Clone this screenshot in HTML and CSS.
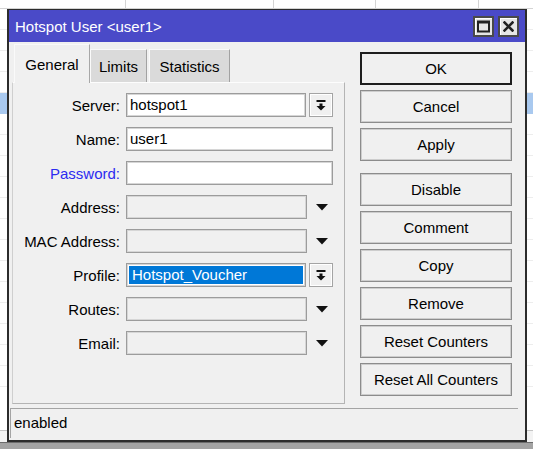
FILE: index.html
```html
<!DOCTYPE html>
<html>
<head>
<meta charset="utf-8">
<link rel="stylesheet" href="styles.css">
</head>
<body>
<div class="desk">
  <div class="table">
    <div class="thead">
      <div class="c c1"></div><div class="c c2"></div><div class="c c3"></div><div class="c c4"></div><div class="c c5"></div>
    </div>
    <div class="tr"></div>
    <div class="tr"></div>
    <div class="tr"></div>
    <div class="tr"></div>
    <div class="tr sel"></div>
    <div class="tr"></div>
    <div class="tr"></div>
    <div class="tr"></div>
    <div class="tr"></div>
    <div class="tr"></div>
    <div class="tr"></div>
    <div class="tr"></div>
    <div class="tr"></div>
    <div class="tr"></div>
    <div class="tr"></div>
    <div class="tr"></div>
    <div class="tr"></div>
    <div class="tr"></div>
  </div>
  <div class="mainstatus"></div>
  <div class="taskbar"></div>

  <div class="win">
    <div class="titlebar">
      <span class="title">Hotspot User &lt;user1&gt;</span>
      <div class="tbtns">
        <span class="tbtn"><svg width="13" height="13" viewBox="0 0 13 13"><rect x="1" y="1.5" width="11" height="10" fill="none" stroke="#222" stroke-width="2"/><rect x="1" y="1" width="11" height="2.5" fill="#222"/></svg></span>
        <span class="tbtn"><svg width="11" height="11" viewBox="0 0 11 11"><path d="M1.5 1.5 L9.5 9.5 M9.5 1.5 L1.5 9.5" stroke="#222" stroke-width="2.6" stroke-linecap="square"/></svg></span>
      </div>
    </div>
    <div class="wbody">
      <div class="main">
        <div class="left">
          <div class="tabs">
            <div class="tab active">General</div>
            <div class="tab t-limits">Limits</div>
            <div class="tab t-stats">Statistics</div>
          </div>
          <div class="panel">
            <div class="row">
              <span class="lbl">Server:</span>
              <div class="input short">hotspot1</div>
              <div class="ddbtn"><svg width="10" height="11" viewBox="0 0 10 11"><rect x="0.5" y="0" width="9" height="2" fill="#111"/><rect x="3.5" y="3.5" width="3" height="3" fill="#111"/><path d="M0.5 6 L9.5 6 L5 10.5 Z" fill="#111"/></svg></div>
            </div>
            <div class="row">
              <span class="lbl">Name:</span>
              <div class="input full">user1</div>
            </div>
            <div class="row">
              <span class="lbl blue">Password:</span>
              <div class="input full"></div>
            </div>
            <div class="row">
              <span class="lbl">Address:</span>
              <div class="input dis"></div>
              <div class="tri"><svg width="12" height="7" viewBox="0 0 12 7"><path d="M0 0 L12 0 L6 6.5 Z" fill="#111"/></svg></div>
            </div>
            <div class="row">
              <span class="lbl">MAC Address:</span>
              <div class="input dis"></div>
              <div class="tri"><svg width="12" height="7" viewBox="0 0 12 7"><path d="M0 0 L12 0 L6 6.5 Z" fill="#111"/></svg></div>
            </div>
            <div class="row">
              <span class="lbl">Profile:</span>
              <div class="input short selbox"><span class="selected">Hotspot_Voucher</span></div>
              <div class="ddbtn"><svg width="10" height="11" viewBox="0 0 10 11"><rect x="0.5" y="0" width="9" height="2" fill="#111"/><rect x="3.5" y="3.5" width="3" height="3" fill="#111"/><path d="M0.5 6 L9.5 6 L5 10.5 Z" fill="#111"/></svg></div>
            </div>
            <div class="row">
              <span class="lbl">Routes:</span>
              <div class="input dis"></div>
              <div class="tri"><svg width="12" height="7" viewBox="0 0 12 7"><path d="M0 0 L12 0 L6 6.5 Z" fill="#111"/></svg></div>
            </div>
            <div class="row">
              <span class="lbl">Email:</span>
              <div class="input dis"></div>
              <div class="tri"><svg width="12" height="7" viewBox="0 0 12 7"><path d="M0 0 L12 0 L6 6.5 Z" fill="#111"/></svg></div>
            </div>
          </div>
        </div>
        <div class="buttons">
          <div class="btn default">OK</div>
          <div class="btn">Cancel</div>
          <div class="btn">Apply</div>
          <div class="btn sep">Disable</div>
          <div class="btn">Comment</div>
          <div class="btn">Copy</div>
          <div class="btn">Remove</div>
          <div class="btn">Reset Counters</div>
          <div class="btn">Reset All Counters</div>
        </div>
      </div>
      <div class="status">enabled</div>
    </div>
  </div>
</div>
</body>
</html>
```
FILE: styles.css
```css
* { box-sizing: border-box; }
html, body { margin: 0; padding: 0; }
body {
  font-family: "Liberation Sans", Arial, sans-serif;
  font-size: 15px;
  color: #000;
  background: #fff;
}
.desk {
  position: relative;
  width: 533px;
  height: 449px;
  overflow: hidden;
  display: flex;
  flex-direction: column;
  background: #fff;
}
.table { flex: 1; overflow: hidden; }
.thead { display: flex; height: 9px; border-bottom: 1px solid #d4d4d4; }
.c { height: 100%; border-right: 1px solid #d4d4d4; }
.c1 { width: 126px; }
.c2 { width: 148px; }
.c3 { width: 102px; }
.c4 { width: 103px; }
.c5 { flex: 1; border-right: none; }
.tr { height: 21px; border-bottom: 1px solid #ededed; }
.tr.sel { background: #a9c9ef; border-bottom-color: #a9c9ef; }
.mainstatus { height: 12px; border-top: 1px solid #c4c4c4; background: #f3f3f3; }
.taskbar { height: 7px; background: #a3a3a3; border-top: 1px solid #6c6c6c; }

.win {
  position: absolute;
  left: 7px;
  top: 9px;
  width: 520px;
  height: 433px;
  border: 2px solid #2c2c2c;
  border-top-width: 1px;
  background: #f0f0f0;
  display: flex;
  flex-direction: column;
}
.titlebar {
  height: 32px;
  background: #4a4ac8;
  display: flex;
  align-items: center;
  justify-content: space-between;
  padding: 0 6px 0 6px;
}
.title { color: #fff; font-size: 15px; line-height: 32px; padding-top: 1px; }
.tbtns { display: flex; gap: 4px; }
.tbtn {
  width: 21px;
  height: 21px;
  background: #e6e6e6;
  border: 2px solid #4a4a4a;
  box-shadow: inset 1px 1px 0 #fff;
  display: flex;
  align-items: center;
  justify-content: center;
}
.wbody { flex: 1; display: flex; flex-direction: column; }
.main { display: flex; }
.left { margin-left: 3px; width: 333px; }
.tabs {
  margin-top: 2px;
  height: 38px;
  display: flex;
  align-items: flex-end;
  padding-left: 2px;
}
.tab {
  height: 33px;
  background: #dadada;
  border-top: 1px solid #fafafa;
  border-left: 1px solid #fafafa;
  border-right: 1px solid #a2a2a2;
  text-align: center;
  line-height: 34px;
  font-size: 15px;
}
.tab.active {
  position: relative;
  z-index: 1;
  width: 76px;
  height: 39px;
  margin-bottom: -1px;
  background: #f0f0f0;
  line-height: 39px;
  border-right-color: #a8a8a8;
}
.t-limits { width: 57px; }
.t-stats { width: 81px; margin-left: 2px; }
.panel {
  height: 322px;
  background: #f0f0f0;
  border: 1px solid #b4b4b4;
  border-top-color: #fdfdfd;
  border-left-color: #cfcfcf;
  padding-top: 10px;
}
.row {
  display: flex;
  align-items: center;
  height: 24px;
  margin-bottom: 10px;
}
.lbl {
  width: 107px;
  margin-right: 6px;
  text-align: right;
  white-space: nowrap;
  font-size: 15px;
}
.lbl.blue { color: #2b2bf0; }
.input {
  height: 24px;
  background: #fff;
  border: 1px solid #9c9c9c;
  box-shadow: inset 0 0 0 1px #d6d6d6;
  padding-left: 3px;
  line-height: 22px;
  font-size: 15px;
  white-space: nowrap;
  overflow: hidden;
}
.input.short { width: 180px; }
.input.full { width: 207px; }
.input.dis { width: 181px; background: #f0f0f0; }
.selbox { padding: 2px; }
.selected {
  display: block;
  height: 18px;
  background: #0078d7;
  color: #fff;
  line-height: 18px;
  padding-left: 3px;
}
.ddbtn {
  width: 24px;
  height: 24px;
  margin-left: 3px;
  background: #f0f0f0;
  border: 1px solid #a4a4a4;
  box-shadow: inset 0 0 0 1px #fff;
  display: flex;
  align-items: center;
  justify-content: center;
}
.tri {
  width: 26px;
  height: 24px;
  display: flex;
  align-items: center;
  justify-content: center;
  padding-left: 4px;
}
.buttons {
  margin-left: 15px;
  margin-top: 10px;
  width: 152px;
  display: flex;
  flex-direction: column;
  gap: 5px;
}
.btn {
  height: 33px;
  background: #f0f0f0;
  border: 1px solid #8c8c8c;
  box-shadow: inset 0 0 0 1px #cdcdcd;
  text-align: center;
  line-height: 31px;
  font-size: 15px;
}
.btn.default { border: 2px solid #1e1e1e; box-shadow: none; line-height: 29px; }
.btn.sep { margin-top: 7px; }
.status {
  margin: 4px 7px 0 1px;
  height: 30px;
  border-top: 1px solid #a4a4a4;
  border-left: 1px solid #a4a4a4;
  padding-left: 3px;
  line-height: 28px;
  font-size: 15px;
}
```
